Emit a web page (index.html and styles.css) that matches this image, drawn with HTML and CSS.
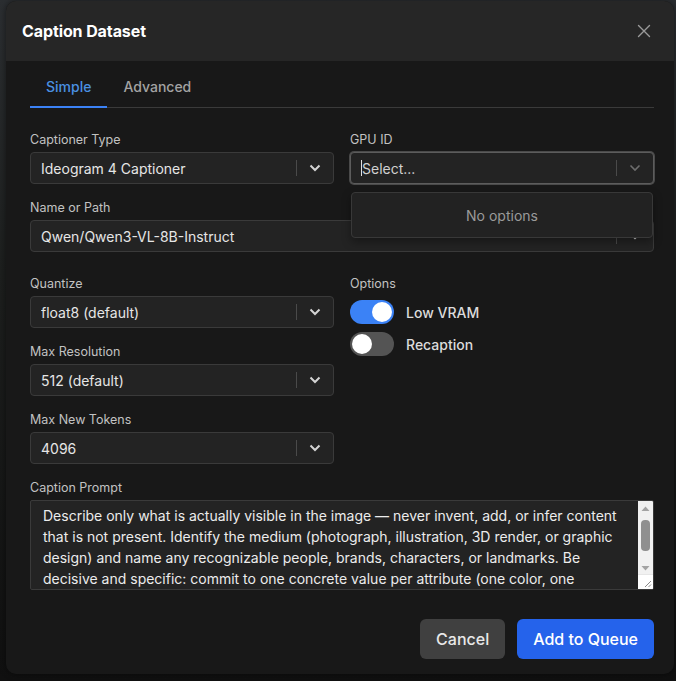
FILE: index.html
```html
<!DOCTYPE html>
<html lang="en">
<head>
<meta charset="utf-8">
<title>Caption Dataset</title>
<link rel="stylesheet" href="styles.css">
</head>
<body>
<div class="dialog">
  <div class="dialog-header">
    <h2 class="dialog-title">Caption Dataset</h2>
    <button class="close-btn" aria-label="Close">
      <svg width="14" height="14" viewBox="0 0 14 14"><path d="M1.5 1.5 L12.5 12.5 M12.5 1.5 L1.5 12.5" stroke="currentColor" stroke-width="1.4" stroke-linecap="round" fill="none"/></svg>
    </button>
  </div>
  <div class="dialog-body">
    <div class="tabs">
      <div class="tab active">Simple</div>
      <div class="tab">Advanced</div>
    </div>
    <div class="panel">
      <div class="grid top-grid">
        <div class="field">
          <label class="label">Captioner Type</label>
          <div class="select">
            <span class="value">Ideogram 4 Captioner</span>
            <span class="sep"></span>
            <span class="chev"><svg width="12" height="8" viewBox="0 0 12 8"><path d="M1.5 1.5 L6 6 L10.5 1.5" stroke="currentColor" stroke-width="2" fill="none"/></svg></span>
          </div>
        </div>
        <div class="field gpu">
          <label class="label">GPU ID</label>
          <div class="select focused">
            <span class="value placeholder"><span class="caret"></span>Select...</span>
            <span class="sep"></span>
            <span class="chev dim"><svg width="12" height="8" viewBox="0 0 12 8"><path d="M1.5 1.5 L6 6 L10.5 1.5" stroke="currentColor" stroke-width="1.6" fill="none"/></svg></span>
          </div>
          <div class="menu">No options</div>
        </div>
        <div class="field span2">
          <label class="label">Name or Path</label>
          <div class="select">
            <span class="value">Qwen/Qwen3-VL-8B-Instruct</span>
            <span class="sep"></span>
            <span class="chev"><svg width="12" height="8" viewBox="0 0 12 8"><path d="M1.5 1.5 L6 6 L10.5 1.5" stroke="currentColor" stroke-width="2" fill="none"/></svg></span>
          </div>
        </div>
      </div>

      <div class="grid mid-grid">
        <div class="col">
          <div class="field">
            <label class="label">Quantize</label>
            <div class="select">
              <span class="value">float8 (default)</span>
              <span class="sep"></span>
              <span class="chev"><svg width="12" height="8" viewBox="0 0 12 8"><path d="M1.5 1.5 L6 6 L10.5 1.5" stroke="currentColor" stroke-width="2" fill="none"/></svg></span>
            </div>
          </div>
          <div class="field">
            <label class="label">Max Resolution</label>
            <div class="select">
              <span class="value">512 (default)</span>
              <span class="sep"></span>
              <span class="chev"><svg width="12" height="8" viewBox="0 0 12 8"><path d="M1.5 1.5 L6 6 L10.5 1.5" stroke="currentColor" stroke-width="2" fill="none"/></svg></span>
            </div>
          </div>
          <div class="field">
            <label class="label">Max New Tokens</label>
            <div class="select">
              <span class="value">4096</span>
              <span class="sep"></span>
              <span class="chev"><svg width="12" height="8" viewBox="0 0 12 8"><path d="M1.5 1.5 L6 6 L10.5 1.5" stroke="currentColor" stroke-width="2" fill="none"/></svg></span>
            </div>
          </div>
        </div>
        <div class="col">
          <div class="field">
            <label class="label">Options</label>
            <div class="options">
              <div class="toggle-row"><span class="toggle on"><span class="knob"></span></span><span class="toggle-label">Low VRAM</span></div>
              <div class="toggle-row"><span class="toggle"><span class="knob"></span></span><span class="toggle-label">Recaption</span></div>
            </div>
          </div>
        </div>
      </div>

      <div class="field prompt">
        <label class="label">Caption Prompt</label>
        <div class="textarea-wrap">
          <textarea class="textarea" rows="4">Describe only what is actually visible in the image — never invent, add, or infer content that is not present. Identify the medium (photograph, illustration, 3D render, or graphic design) and name any recognizable people, brands, characters, or landmarks. Be decisive and specific: commit to one concrete value per attribute (one color, one material, one style) rather than listing alternatives or hedging. Describe the main subject first, then its pose, clothing, expression and action, followed by the setting, background elements, lighting, camera angle and overall composition.</textarea>
          <div class="scrollbar" aria-hidden="true">
            <div class="sb-track">
              <svg class="sb-arrow" width="15" height="12" viewBox="0 0 15 12"><path d="M3.5 8 L7.5 3.5 L11.5 8 Z" fill="#a3a3a3"/></svg>
              <div class="sb-thumb-area"><div class="sb-thumb"></div></div>
              <svg class="sb-arrow" width="15" height="12" viewBox="0 0 15 12"><path d="M3.5 4 L7.5 8.5 L11.5 4 Z" fill="#a3a3a3"/></svg>
            </div>
            <div class="sb-resizer">
              <svg width="15" height="15" viewBox="0 0 15 15"><path d="M13 7 L7 13 M13 10.5 L10.5 13" stroke="#8a8a8a" stroke-width="1" fill="none"/></svg>
            </div>
          </div>
        </div>
      </div>
    </div>
    <div class="footer">
      <button class="btn btn-secondary">Cancel</button>
      <button class="btn btn-primary">Add to Queue</button>
    </div>
  </div>
</div>
</body>
</html>
```

FILE: styles.css
```css
* { box-sizing: border-box; }

html, body {
  margin: 0;
  padding: 0;
  height: 100%;
}

body {
  background: linear-gradient(180deg, #2b2e31 0%, #1d1f1e 40%, #101010 100%);
  font-family: "Inter", "Noto Sans", sans-serif;
  color: #e5e5e5;
  overflow: hidden;
}

.dialog {
  margin: 1px 0 0 6px;
  width: 668px;
  height: 673px;
  background: #181818;
  border-radius: 10px;
  overflow: hidden;
  display: flex;
  flex-direction: column;
  box-shadow: 0 0 6px rgba(0, 0, 0, 0.5);
}

.dialog-header {
  height: 60px;
  flex: none;
  background: #262626;
  display: flex;
  align-items: center;
  justify-content: space-between;
  padding: 0 22px 0 16px;
}

.dialog-title {
  margin: 0;
  font-size: 16px;
  font-weight: 700;
  color: #ffffff;
  letter-spacing: -0.1px;
}

.close-btn {
  background: none;
  border: none;
  padding: 0;
  width: 16px;
  height: 16px;
  color: #9a9a9a;
  display: flex;
  align-items: center;
  justify-content: center;
  cursor: pointer;
}

.dialog-body {
  flex: 1;
  display: flex;
  flex-direction: column;
  padding: 16px 20px 15px 24px;
}

.tabs {
  display: flex;
  border-bottom: 1px solid #3a3a3a;
  height: 31px;
}

.tab {
  padding: 0 16px;
  height: 31px;
  line-height: 20px;
  font-size: 14px;
  font-weight: 500;
  color: #a3a3a3;
  margin-bottom: -1px;
  border-bottom: 2px solid transparent;
}

.tab.active {
  color: #4a90e2;
  border-bottom-color: #3b82f6;
}

.panel {
  padding-top: 24px;
}

.grid {
  display: grid;
  grid-template-columns: 1fr 1fr;
  column-gap: 16px;
}

.top-grid {
  row-gap: 16px;
}

.mid-grid {
  margin-top: 24px;
}

.col {
  display: flex;
  flex-direction: column;
  gap: 16px;
}

.span2 {
  grid-column: 1 / 3;
}

.field {
  display: flex;
  flex-direction: column;
  position: relative;
}

.label {
  font-size: 12.5px;
  line-height: 16px;
  color: #c2c2c2;
  margin-bottom: 4px;
}

.select {
  height: 32px;
  background: #232323;
  border: 1px solid #3a3a3a;
  border-radius: 4px;
  display: flex;
  align-items: center;
  padding-left: 10px;
}

.select.focused {
  border-color: #5c5c5c;
  box-shadow: 0 0 0 1px #4a4a4a;
}

.value {
  flex: 1;
  font-size: 14px;
  color: #e6e6e6;
  white-space: nowrap;
  overflow: hidden;
}

.placeholder {
  color: #d0d0d0;
  display: flex;
  align-items: center;
}

.caret {
  display: inline-block;
  width: 1px;
  height: 16px;
  background: #e0e0e0;
}

.sep {
  width: 1px;
  height: 16px;
  background: #4a4a4a;
}

.chev {
  width: 36px;
  display: flex;
  justify-content: center;
  align-items: center;
  color: #d4d4d4;
}

.chev.dim {
  color: #6e6e6e;
}

.menu {
  position: absolute;
  left: 1px;
  right: 1px;
  top: 60px;
  height: 46px;
  background: #222222;
  border: 1px solid #383838;
  border-radius: 4px;
  display: flex;
  align-items: center;
  justify-content: center;
  font-size: 14px;
  color: #9a9a9a;
  z-index: 5;
  box-shadow: 0 4px 10px rgba(0, 0, 0, 0.35);
}

.options {
  display: flex;
  flex-direction: column;
  gap: 8px;
  padding-top: 4px;
}

.toggle-row {
  display: flex;
  align-items: center;
  gap: 12px;
}

.toggle {
  width: 44px;
  height: 24px;
  border-radius: 12px;
  background: #545454;
  position: relative;
  flex: none;
}

.toggle .knob {
  position: absolute;
  top: 2px;
  left: 2px;
  width: 20px;
  height: 20px;
  border-radius: 50%;
  background: #ffffff;
}

.toggle.on {
  background: #3b82f6;
}

.toggle.on .knob {
  left: 22px;
}

.toggle-label {
  font-size: 14px;
  font-weight: 500;
  color: #dcdcdc;
}

.prompt {
  margin-top: 16px;
}

.textarea-wrap {
  height: 90px;
  display: flex;
  background: #232323;
  border: 1px solid #3a3a3a;
  border-radius: 2px;
  overflow: hidden;
}

.textarea {
  flex: 1;
  min-width: 0;
  height: 100%;
  background: transparent;
  border: none;
  padding: 4px 12px;
  font-family: "Inter", "Noto Sans", sans-serif;
  font-size: 14px;
  line-height: 21px;
  color: #ececec;
  resize: none;
  overflow: hidden;
  outline: none;
}

.scrollbar {
  width: 15px;
  flex: none;
  display: flex;
  flex-direction: column;
  background: #f1f1f1;
}

.sb-track {
  flex: 1;
  display: flex;
  flex-direction: column;
  padding-top: 2px;
}

.sb-arrow {
  display: block;
  flex: none;
}

.sb-thumb-area {
  flex: 1;
  padding: 5px 3px 0;
}

.sb-thumb {
  height: 31px;
  border-radius: 4px;
  background: #8f8f8f;
}

.sb-resizer {
  height: 15px;
  flex: none;
  background: #ffffff;
  border-top: 1px solid #e6e6e6;
}

.sb-resizer svg {
  display: block;
  margin-top: -1px;
}

.footer {
  margin-top: auto;
  display: flex;
  justify-content: flex-end;
  gap: 12px;
}

.btn {
  height: 40px;
  border: none;
  border-radius: 6px;
  padding: 0 16px;
  font-family: "Inter", "Noto Sans", sans-serif;
  font-size: 16px;
  font-weight: 500;
  cursor: pointer;
}

.btn-secondary {
  background: #404040;
  color: #e8e8e8;
}

.btn-primary {
  background: #2563eb;
  color: #ffffff;
}
```
